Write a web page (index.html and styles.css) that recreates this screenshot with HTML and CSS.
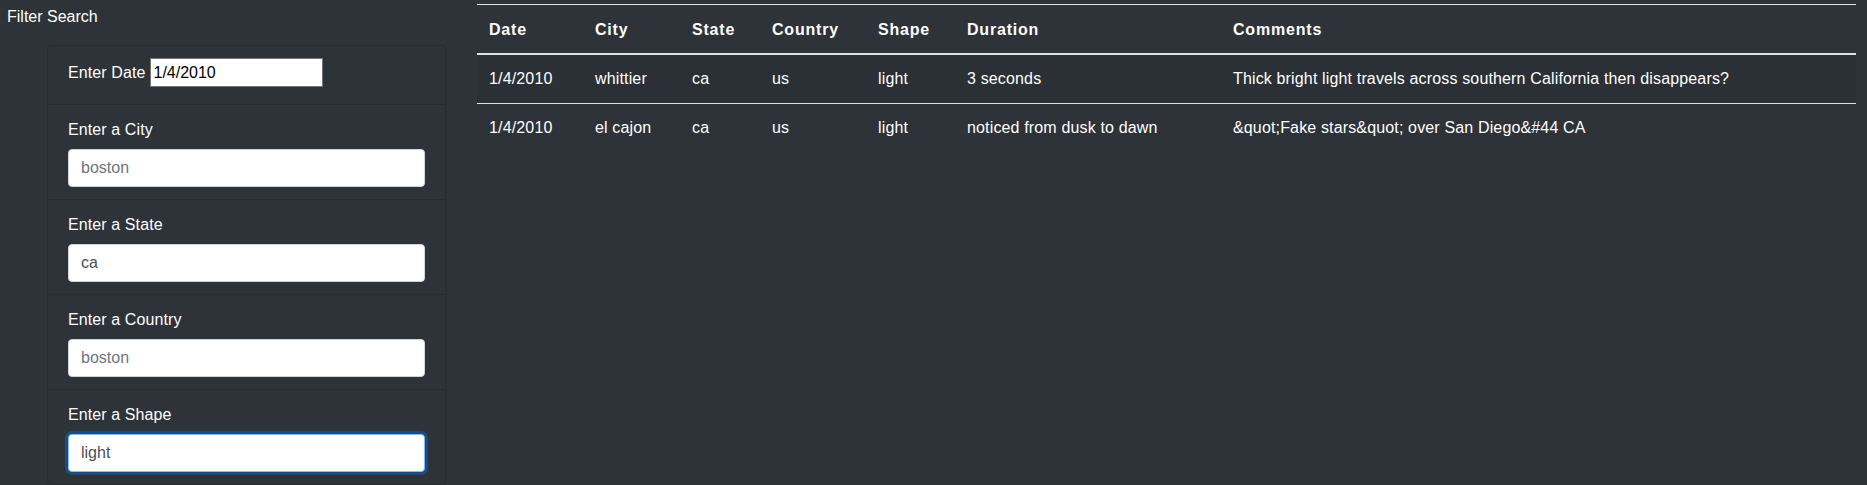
FILE: index.html
```html
<!DOCTYPE html>
<html lang="en">
<head>
<meta charset="utf-8">
<title>UFO Sightings</title>
<link rel="stylesheet" href="styles.css">
</head>
<body>
<div class="page">
  <aside class="sidebar">
    <div class="sidebar-title">Filter Search</div>
    <ul class="filters">
      <li class="filter filter-inline">
        <label class="filter-label" for="datetime">Enter Date</label>
        <input class="date-input" id="datetime" type="text" value="1/4/2010">
      </li>
      <li class="filter">
        <label class="filter-label" for="city">Enter a City</label>
        <input class="form-control" id="city" type="text" placeholder="boston">
      </li>
      <li class="filter">
        <label class="filter-label" for="state">Enter a State</label>
        <input class="form-control" id="state" type="text" value="ca">
      </li>
      <li class="filter">
        <label class="filter-label" for="country">Enter a Country</label>
        <input class="form-control" id="country" type="text" placeholder="boston">
      </li>
      <li class="filter">
        <label class="filter-label" for="shape">Enter a Shape</label>
        <input class="form-control is-focused" id="shape" type="text" value="light">
      </li>
    </ul>
  </aside>
  <main class="results">
    <table class="ufo-table">
      <colgroup>
        <col class="c-date"><col class="c-city"><col class="c-state"><col class="c-country"><col class="c-shape"><col class="c-duration"><col class="c-comments">
      </colgroup>
      <thead>
        <tr>
          <th>Date</th><th>City</th><th>State</th><th>Country</th><th>Shape</th><th>Duration</th><th>Comments</th>
        </tr>
      </thead>
      <tbody>
        <tr>
          <td>1/4/2010</td><td>whittier</td><td>ca</td><td>us</td><td>light</td><td>3 seconds</td><td>Thick bright light travels across southern California then disappears?</td>
        </tr>
        <tr>
          <td>1/4/2010</td><td>el cajon</td><td>ca</td><td>us</td><td>light</td><td>noticed from dusk to dawn</td><td>&amp;quot;Fake stars&amp;quot; over San Diego&amp;#44 CA</td>
        </tr>
      </tbody>
    </table>
  </main>
</div>
</body>
</html>
```

FILE: styles.css
```css
html, body {
  margin: 0;
  padding: 0;
  background: #2e3239;
  color: #ffffff;
  font-family: "Liberation Sans", Arial, Helvetica, sans-serif;
  font-size: 16px;
  line-height: 24px;
  overflow: hidden;
}

.page {
  display: flex;
  align-items: flex-start;
}

.sidebar {
  width: 446px;
  flex: none;
}

.sidebar-title {
  padding: 5px 0 0 7px;
  height: 24px;
  margin-bottom: 16px;
}

.filters {
  list-style: none;
  margin: 0 0 0 47px;
  padding: 0;
  border: 1px solid #282c32;
  border-radius: 4px;
}

.filter {
  padding: 12px 20px;
  border-top: 1px solid #282c32;
  display: flex;
  flex-direction: column;
}

.filter:first-child {
  border-top: none;
}

.filter-inline {
  flex-direction: row;
  align-items: center;
  gap: 5px;
  padding-bottom: 17px;
}

.filter-label {
  display: block;
  margin-bottom: 8px;
  line-height: 24px;
  padding-top: 1px;
  height: 23px;
  letter-spacing: 0.1px;
}

.filter-inline .filter-label {
  margin-bottom: 0;
  padding-top: 0;
  height: 24px;
}

.date-input {
  box-sizing: border-box;
  width: 173px;
  height: 29px;
  margin: 0;
  padding: 1px 2px;
  border: 1px solid #767676;
  background: #ffffff;
  color: #000000;
  font-family: "Liberation Sans", Arial, sans-serif;
  font-size: 16px;
}

.form-control {
  box-sizing: border-box;
  width: 100%;
  height: 38px;
  margin: 0;
  padding: 6px 12px;
  border: 1px solid #ced4da;
  border-radius: 4px;
  background: #ffffff;
  color: #495057;
  font-family: "Liberation Sans", Arial, sans-serif;
  font-size: 16px;
  line-height: 24px;
  outline: none;
}

.form-control::placeholder {
  color: #6c757d;
  opacity: 1;
}

.form-control.is-focused {
  border-color: #80bdff;
  box-shadow: 0 0 0 3px rgba(0, 123, 255, 0.35);
}

.results {
  margin-left: 31px;
  padding-top: 4px;
}

.ufo-table {
  width: 1379px;
  table-layout: fixed;
  border-collapse: collapse;
  color: #ffffff;
}

.c-date { width: 106px; }
.c-city { width: 97px; }
.c-state { width: 80px; }
.c-country { width: 106px; }
.c-shape { width: 89px; }
.c-duration { width: 266px; }
.c-comments { width: 635px; }

.ufo-table th,
.ufo-table td {
  padding: 12px;
  text-align: left;
  vertical-align: top;
  border-top: 1px solid #dee2e6;
  white-space: nowrap;
  line-height: 24px;
}

.ufo-table td {
  letter-spacing: 0.15px;
}

.ufo-table th {
  font-weight: bold;
  vertical-align: bottom;
  border-bottom: 2px solid #dee2e6;
  letter-spacing: 0.8px;
  padding-top: 13px;
  padding-bottom: 11px;
}

.ufo-table tbody tr:nth-of-type(odd) {
  background: rgba(0, 0, 0, 0.05);
}

.ufo-table tbody tr:first-child td {
  border-top: none;
}
```
